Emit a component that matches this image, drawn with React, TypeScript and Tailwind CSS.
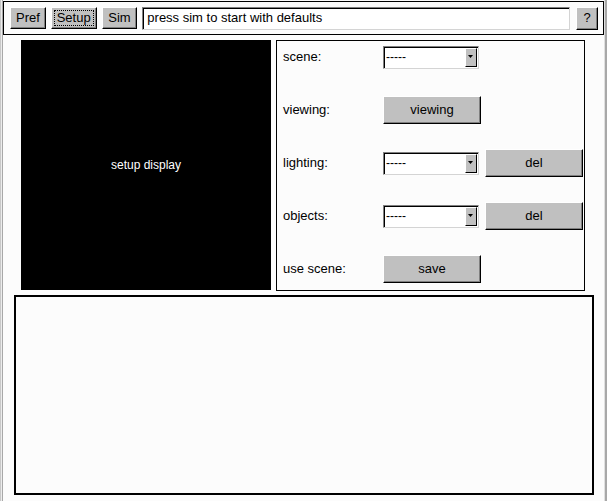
import React from "react";

const font = { fontFamily: '"Liberation Sans", Arial, sans-serif' };

function Btn({ children, w, h = 22, focus = false }: { children: React.ReactNode; w: string; h?: number; focus?: boolean }) {
  return (
    <div
      className={`${w} relative flex items-center justify-center bg-[#c0c0c0] border border-t-white border-l-white border-b-black border-r-black shadow-[inset_-1px_-1px_0_#808080] text-[13px] text-black`}
      style={{ height: h }}
    >
      {focus && <div className="absolute inset-[2px] border border-dotted border-black" />}
      <span className="relative">{children}</span>
    </div>
  );
}

function Select() {
  return (
    <div className="w-[96px] h-[23px] flex bg-white border border-t-[#808080] border-l-[#808080] border-b-[#d4d4d4] border-r-[#d4d4d4] shadow-[inset_1px_1px_0_#000]">
      <div className="flex-1 flex items-center pl-[2px] text-[12px] text-black leading-none">-----</div>
      <div className="w-[12px] h-[19px] mt-[1px] mr-[1px] bg-[#c0c0c0] border border-t-white border-l-white border-b-black border-r-black flex items-center justify-center">
        <svg width="6" height="4" viewBox="0 0 6 4"><path d="M0 0h5L2.5 3z" fill="#000" /></svg>
      </div>
    </div>
  );
}

function Row({ label, children }: { label: string; children?: React.ReactNode }) {
  return (
    <div className="h-[30px] flex items-center">
      <div className="w-[106px] pl-[6px] text-[13px] text-black">{label}</div>
      <div className="flex items-center gap-[6px]">{children}</div>
    </div>
  );
}

export default function App() {
  return (
    <div className="w-[607px] h-[501px] bg-[#fcfcfc] flex overflow-hidden" style={font}>
      <div className="w-[3px] h-full flex">
        <div className="w-[1px] bg-[#c8c8c8]" />
        <div className="w-[1px] bg-[#ececec]" />
        <div className="w-[1px] bg-[#a8a8a8]" />
      </div>
      <div className="w-[601px] flex flex-col">
        <div className="mt-[1px] h-[34px] border border-black flex items-center pl-[6px] pr-[5px]">
          <Btn w="w-[36px]">Pref</Btn>
          <div className="w-[5px]" />
          <Btn w="w-[46px]" focus>Setup</Btn>
          <div className="w-[5px]" />
          <Btn w="w-[36px]">Sim</Btn>
          <div className="w-[5px]" />
          <div className="w-[430px] h-[23px] bg-white border border-t-[#808080] border-l-[#808080] border-b-[#d4d4d4] border-r-[#d4d4d4] shadow-[inset_1px_1px_0_#000] flex items-center pl-[4px] text-[13px] text-black">
            press sim to start with defaults
          </div>
          <div className="w-[6px]" />
          <Btn w="w-[22px]" h={23}>?</Btn>
        </div>
        <div className="mt-[5px] flex ml-[18px] gap-[5px]">
          <div className="w-[250px] h-[250px] bg-black flex items-center justify-center text-white text-[12px]">
            setup display
          </div>
          <div className="w-[309px] h-[251px] border border-black pt-[1px] flex flex-col gap-[23px]">
            <Row label="scene:"><Select /></Row>
            <Row label="viewing:"><Btn w="w-[98px]" h={28}>viewing</Btn></Row>
            <Row label="lighting:"><Select /><Btn w="w-[98px]" h={28}>del</Btn></Row>
            <Row label="objects:"><Select /><Btn w="w-[98px]" h={28}>del</Btn></Row>
            <Row label="use scene:"><Btn w="w-[98px]" h={28}>save</Btn></Row>
          </div>
        </div>
        <div className="mt-[4px] ml-[11px] w-[580px] h-[200px] border-2 border-black bg-[#fcfcfc]" />
      </div>
      <div className="w-[3px] h-full flex">
        <div className="w-[1px] bg-[#e0e0e0]" />
        <div className="w-[2px] bg-[#a8a8a8]" />
      </div>
    </div>
  );
}
